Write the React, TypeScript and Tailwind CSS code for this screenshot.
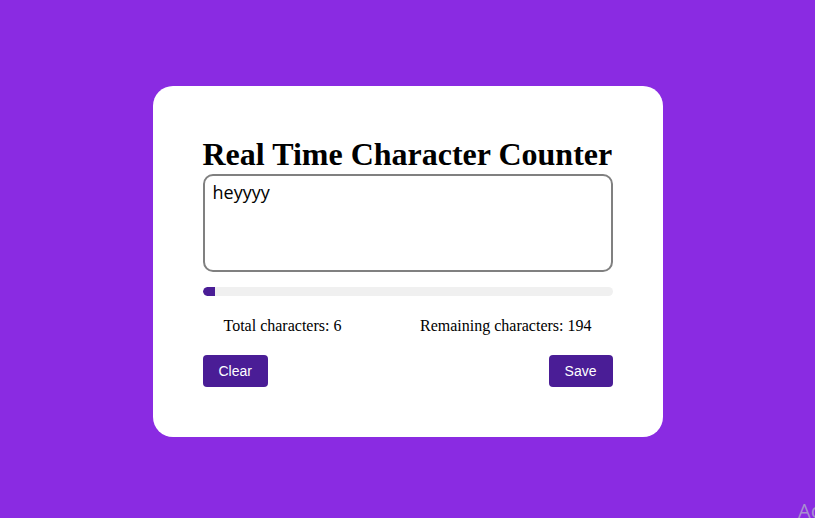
import { useState } from 'react'

const MAX = 200

export default function App() {
  const [text, setText] = useState('heyyyy')
  const pct = Math.min(100, (text.length / MAX) * 100)

  return (
    <div className="relative w-full h-[518px] overflow-hidden bg-[#8a2be2] flex justify-center pt-[86px]">
      <div className="w-[510px] h-[351px] bg-white rounded-[20px] p-[50px] flex flex-col">
        <h1 className="m-0 text-[32px] font-bold text-black leading-[37px] font-['Liberation_Serif',serif]">
          Real Time Character Counter
        </h1>
        <textarea
          value={text}
          onChange={(e) => setText(e.target.value.slice(0, MAX))}
          className="mt-px h-[98px] w-full resize-none rounded-[10px] border-2 border-[#808080] px-2 pt-1 text-[18px] leading-[24px] text-black outline-none font-['Open_Sans',sans-serif]"
        />
        <div className="mt-[15px] h-[9px] w-full rounded-full bg-[#f0f0f0] overflow-hidden">
          <div className="h-full rounded-l-full bg-[#4a1d96]" style={{ width: `${pct}%` }} />
        </div>
        <div className="mt-[21px] flex justify-between px-[21px] text-base leading-[18px] text-black font-['Liberation_Serif',serif]">
          <span>Total characters: {text.length}</span>
          <span>Remaining characters: {MAX - text.length}</span>
        </div>
        <div className="mt-[20px] flex justify-between font-['Liberation_Sans',sans-serif]">
          <button
            onClick={() => setText('')}
            className="h-8 rounded px-4 bg-[#4a1d96] text-white text-sm"
          >
            Clear
          </button>
          <button className="h-8 rounded px-4 bg-[#4a1d96] text-white text-sm">
            Save
          </button>
        </div>
      </div>
      <div className="absolute left-[798px] top-[496px] whitespace-nowrap text-[20px] text-[#a88fcf] font-['Open_Sans',sans-serif]">
        Activate Windows
      </div>
    </div>
  )
}
